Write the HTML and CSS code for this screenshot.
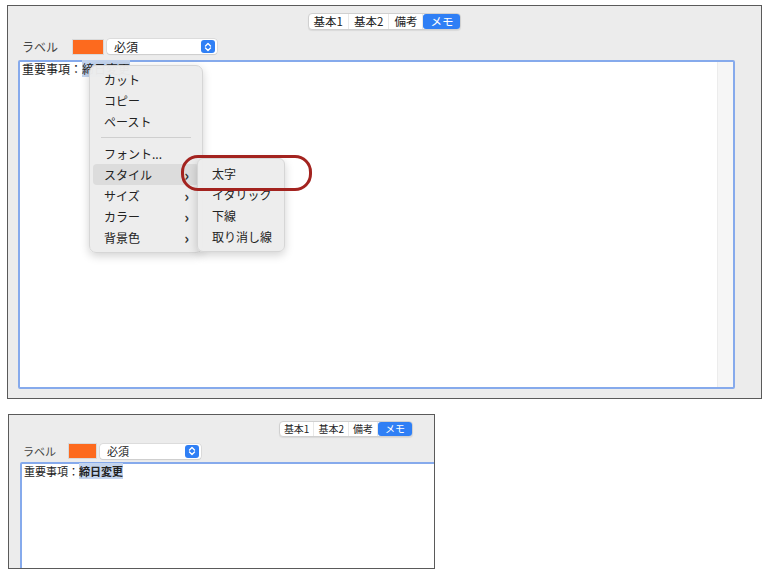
FILE: index.html
```html
<!doctype html>
<html lang="ja">
    <head>
        <meta charset="UTF-8" />
        <title>メモ スタイル</title>
        <link rel="stylesheet" href="styles.css">
    </head>
    <body>
        <div class="shot shot-large">
            <div class="tab-row">
                <div class="tabs">
                    <span class="tab">基本1</span>
                    <span class="tab">基本2</span>
                    <span class="tab">備考</span>
                    <span class="tab selected">メモ</span>
                </div>
            </div>
            <div class="label-row">
                <span class="label-text">ラベル</span>
                <span class="swatch"></span>
                <div class="popup">
                    <span>必須</span>
                    <span class="stepper">
                        <svg width="8" height="10" viewBox="0 0 8 10"><path d="M1.5 4 L4 1.5 L6.5 4 M1.5 6 L4 8.5 L6.5 6" fill="none" stroke="#fff" stroke-width="1.4" stroke-linecap="round" stroke-linejoin="round"/></svg>
                    </span>
                </div>
            </div>
            <div class="editor">
                <div class="editor-text">重要事項：<span class="sel">締日変更</span></div>
                <div class="scroll-track"></div>

                <!-- context menu -->
                <div class="menu">
                    <div class="item">カット</div>
                    <div class="item">コピー</div>
                    <div class="item">ペースト</div>
                    <div class="sep"></div>
                    <div class="item">フォント...</div>
                    <div class="item hover">スタイル<span class="chev">›</span></div>
                    <div class="item">サイズ<span class="chev">›</span></div>
                    <div class="item">カラー<span class="chev">›</span></div>
                    <div class="item">背景色<span class="chev">›</span></div>
                </div>
                <div class="submenu">
                    <div class="item">太字</div>
                    <div class="item">イタリック</div>
                    <div class="item">下線</div>
                    <div class="item">取り消し線</div>
                </div>
                <div class="callout"></div>
            </div>
        </div>

        <div class="shot shot-small">
            <div class="tab-row">
                <div class="tabs">
                    <span class="tab">基本1</span>
                    <span class="tab">基本2</span>
                    <span class="tab">備考</span>
                    <span class="tab selected">メモ</span>
                </div>
            </div>
            <div class="label-row">
                <span class="label-text">ラベル</span>
                <span class="swatch"></span>
                <div class="popup">
                    <span>必須</span>
                    <span class="stepper">
                        <svg width="8" height="10" viewBox="0 0 8 10"><path d="M1.5 4 L4 1.5 L6.5 4 M1.5 6 L4 8.5 L6.5 6" fill="none" stroke="#fff" stroke-width="1.4" stroke-linecap="round" stroke-linejoin="round"/></svg>
                    </span>
                </div>
            </div>
            <div class="editor">
                <div class="editor-text">重要事項：<span class="sel bold">締日変更</span></div>
            </div>
        </div>
    </body>
</html>
```

FILE: styles.css
```css
body {
    margin: 0;
    padding: 5px 0 0 7px;
    background-color: #ffffff;
    font-family: "Noto Sans CJK JP", "Noto Sans", sans-serif;
    color: #222;
    box-sizing: border-box;
}
.shot {
    display: flex;
    flex-direction: column;
    background-color: #ececec;
    border: 1.5px solid #5a5a5a;
    box-sizing: border-box;
    overflow: hidden;
}
.shot-large {
    width: 755px;
    height: 394px;
    font-size: 12px;
}
.shot-small {
    width: 427px;
    height: 155px;
    margin: 15px 0 0 1px;
    font-size: 11px;
}
.tab-row {
    display: flex;
    justify-content: center;
    padding-top: 7px;
}
.shot-small .tab-row {
    justify-content: flex-end;
    padding: 6px 21px 0 0;
}
.tabs {
    display: flex;
    align-items: center;
    background-color: #fff;
    border: 1px solid #d0d0d0;
    border-radius: 4px;
    box-shadow: 0 1px 1px rgba(0, 0, 0, 0.08);
    font-size: 11.5px;
    line-height: 15px;
}
.shot-small .tabs {
    font-size: 10px;
    line-height: 14px;
}
.tab {
    padding: 0 5px;
    border-right: 1px solid #e8e8e8;
}
.shot-small .tab {
    padding: 0 4px;
}
.tab.selected {
    background-color: #2f7ff5;
    color: #fff;
    border-radius: 3px;
    border-right: none;
    padding: 0 7px;
}
.label-row {
    display: flex;
    align-items: center;
    padding: 8px 0 5px 14px;
}
.shot-small .label-row {
    padding: 6px 0 3px 14px;
}
.label-text {
    width: 50px;
    color: #444;
}
.shot-small .label-text {
    width: 45px;
}
.swatch {
    width: 30px;
    height: 14px;
    background-color: #fd6a1e;
    border: 1px solid #d9d9d9;
}
.shot-small .swatch {
    width: 27px;
}
.popup {
    display: flex;
    align-items: center;
    justify-content: space-between;
    width: 110px;
    height: 15px;
    margin-left: 3px;
    padding: 0 2px 0 7px;
    background-color: #fff;
    border-radius: 3px;
    box-shadow: 0 0 0 0.5px #ccc, 0 1px 1px rgba(0, 0, 0, 0.12);
    box-sizing: border-box;
}
.shot-small .popup {
    width: 101px;
}
.stepper {
    display: flex;
    align-items: center;
    justify-content: center;
    width: 14px;
    height: 13px;
    background-color: #2f7ff5;
    border-radius: 3px;
}
.editor {
    position: relative;
    flex: 1;
    margin: 0 26px 9px 10px;
    background-color: #fff;
    border: 2px solid #86aaec;
    border-radius: 2px;
}
.shot-small .editor {
    margin: 0 -4px -4px 11px;
}
.editor-text {
    padding: 0 0 0 2px;
    line-height: 14px;
    color: #222;
}
.sel {
    background-color: #c3d4ee;
}
.bold {
    font-weight: bold;
}
.scroll-track {
    position: absolute;
    top: 0;
    right: 0;
    bottom: 0;
    width: 15px;
    background-color: #f6f6f6;
    border-left: 1px solid #ececec;
}
/* menus */
.menu,
.submenu {
    position: absolute;
    background-color: rgba(236, 236, 236, 0.97);
    border-radius: 7px;
    border: 1px solid #d6d6d6;
    box-shadow: 0 3px 10px rgba(0, 0, 0, 0.18);
    padding: 4px 3px;
    font-size: 12px;
    color: #222;
}
.menu {
    left: 69px;
    top: 3px;
    width: 106px;
    padding-top: 3px;
}
.submenu {
    left: 177px;
    top: 96px;
    width: 80px;
    border-radius: 6px;
}
.item {
    position: relative;
    height: 21px;
    line-height: 21px;
    padding-left: 11px;
    border-radius: 4px;
}
.item.hover {
    background-color: #dcdcdc;
}
.chev {
    position: absolute;
    right: 10px;
    top: 0;
    font-size: 15px;
    font-weight: bold;
    color: #333;
}
.sep {
    height: 1px;
    margin: 5px 8px;
    background-color: #cfcfcf;
}
.callout {
    position: absolute;
    left: 161px;
    top: 93px;
    width: 125px;
    height: 30px;
    border: 3px solid #a3231f;
    border-radius: 17px;
}
```
